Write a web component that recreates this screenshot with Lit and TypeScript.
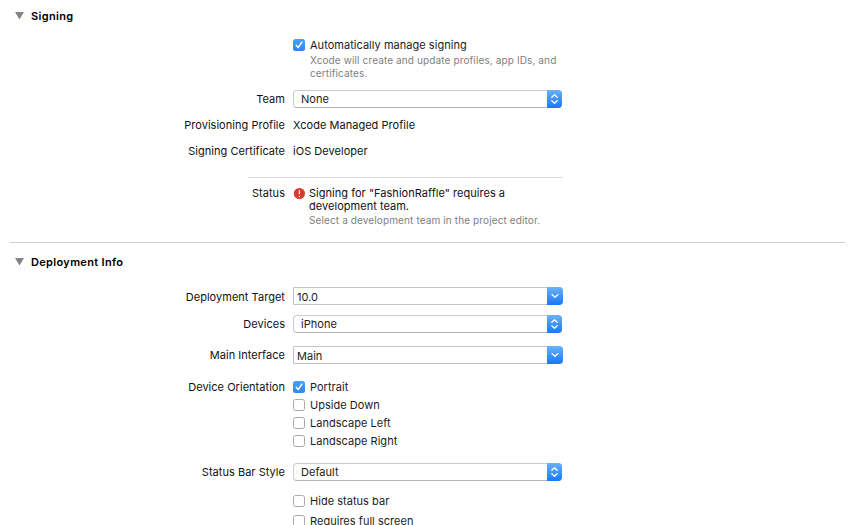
import { LitElement, html, svg, css } from "lit";
import { customElement, property } from "lit/decorators.js";

@customElement("mac-check")
class MacCheck extends LitElement {
  @property({ type: Boolean }) checked = false;
  @property() label = "";
  static styles = css`
    :host { display: flex; align-items: center; height: 18px; }
    .box { box-sizing: border-box; width: 12px; height: 12px; border: 1px solid #a9a9a9; border-radius: 2.5px; background: #fff; margin-right: 5px; flex: none; }
    .box.on { border: 0; background: linear-gradient(#4ba0f6, #2f86ee); }
    svg { display: block; }
    .label { white-space: nowrap; color: #1c1c1c; }
  `;
  render() {
    return html`<span class="box ${this.checked ? "on" : ""}">${this.checked
      ? html`<svg width="12" height="12" viewBox="0 0 12 12"><path d="M3.2 6.3 5.2 8.6 8.9 3.2" fill="none" stroke="#fff" stroke-width="1.5" stroke-linecap="round" stroke-linejoin="round"/></svg>`
      : ""}</span><span class="label">${this.label}</span>`;
  }
}

@customElement("mac-field")
class MacField extends LitElement {
  @property() kind = "popup";
  @property() value = "";
  static styles = css`
    :host { display: block; }
    .field { box-sizing: border-box; display: flex; height: 18px; width: 269px; border: 1px solid #cbcbcb; border-bottom-color: #b5b5b5; border-radius: 4px; background: #fff; }
    .combo { width: 270px; border-color: #c4c4c4; border-radius: 0 4px 4px 0; }
    .value { flex: 1; line-height: 17px; padding-left: 7px; color: #1c1c1c; }
    .combo .value { padding-left: 3px; line-height: 18px; }
    .cap { width: 15px; height: 18px; margin: -1px -1px -1px 0; border-radius: 0 4px 4px 0; background: linear-gradient(#6bb2fa, #3f95f8 50%, #147bf8); }
    .combo .cap { width: 16px; }
    svg { display: block; width: 100%; height: 18px; }
  `;
  render() {
    const combo = this.kind === "combo";
    const arrow = combo
      ? svg`<path d="M5 7.6 8 10.3 11 7.6"/>`
      : svg`<path d="M4.8 7.3 7.5 4.8 10.2 7.3M4.8 10.7 7.5 13.2 10.2 10.7"/>`;
    return html`<div class="field ${combo ? "combo" : ""}">
      <span class="value">${this.value}</span>
      <span class="cap"><svg viewBox="0 0 ${combo ? 16 : 15} 18" fill="none" stroke="#fff" stroke-width="1.3" stroke-linecap="round" stroke-linejoin="round">${arrow}</svg></span>
    </div>`;
  }
}

@customElement("app-root")
class AppRoot extends LitElement {
  static styles = css`
    :host { display: block; box-sizing: border-box; height: 525px; overflow: hidden; background: #fff; color: #111; font: 11px/18px Inter, "Liberation Sans", sans-serif; letter-spacing: 0.03px; padding-top: 7px; }
    .head { display: flex; align-items: center; height: 18px; padding-left: 15px; font-weight: 600; letter-spacing: 0.33px; color: #000; }
    .head svg { margin-right: 7px; }
    .row { display: grid; grid-template-columns: 285px 1fr; column-gap: 8px; white-space: nowrap; }
    .name { text-align: right; }
    .low { padding-top: 1px; height: 17px; }
    .g2 { margin-top: 2px; }
    .g8 { margin-top: 8px; }
    .g10 { margin-top: 10px; }
    .g11 { margin-top: 11px; }
    .g13 { margin-top: 13px; }
    .g14 { margin-top: 14px; }
    .g16 { margin-top: 16px; }
    .help { color: #808080; font-size: 10px; line-height: 13px; letter-spacing: 0.12px; }
    .indent { padding-left: 17px; }
    .rule { height: 1px; width: 315px; margin: 17px 0 9px 248px; background: #dcdcdc; }
    .divider { height: 1px; margin: 15px 16px 10px 10px; background: #cfcfcf; }
    .status { line-height: 13px; }
    .message { display: flex; }
    .message svg { margin: 0 4px 0 0; flex: none; }
    .message .help { margin-top: 1px; }
  `;
  private head(title: string) {
    return html`<div class="head"><svg width="9" height="8" viewBox="0 0 9 8"><path d="M0 0H9L4.5 7.5Z" fill="#858585"/></svg>${title}</div>`;
  }
  render() {
    return html`
      ${this.head("Signing")}
      <div class="row g11"><span></span><div>
        <mac-check checked label="Automatically manage signing"></mac-check>
        <div class="help indent">Xcode will create and update profiles, app IDs, and<br>certificates.</div>
      </div></div>
      <div class="row g10"><span class="name">Team</span><mac-field value="None"></mac-field></div>
      <div class="row g8"><span class="name">Provisioning Profile</span><span>Xcode Managed Profile</span></div>
      <div class="row g8"><span class="name">Signing Certificate</span><span>iOS Developer</span></div>
      <div class="rule"></div>
      <div class="row status"><span class="name">Status</span><div class="message">
        <svg width="12" height="13" viewBox="0 0 12 13"><circle cx="6.4" cy="6.5" r="5.6" fill="#db3a31"/><path d="M6.4 3.3V7.3M6.4 8.9V9.9" stroke="#fff" stroke-width="1.1"/></svg>
        <div>Signing for "FashionRaffle" requires a<br>development team.<div class="help">Select a development team in the project editor.</div></div>
      </div></div>
      <div class="divider"></div>
      ${this.head("Deployment Info")}
      <div class="row g16"><span class="name low">Deployment Target</span><mac-field kind="combo" value="10.0"></mac-field></div>
      <div class="row g10"><span class="name">Devices</span><mac-field value="iPhone"></mac-field></div>
      <div class="row g13"><span class="name">Main Interface</span><mac-field kind="combo" value="Main"></mac-field></div>
      <div class="row g14"><span class="name">Device Orientation</span><div>
        <mac-check checked label="Portrait"></mac-check>
        <mac-check label="Upside Down"></mac-check>
        <mac-check label="Landscape Left"></mac-check>
        <mac-check label="Landscape Right"></mac-check>
      </div></div>
      <div class="row g13"><span class="name">Status Bar Style</span><mac-field value="Default"></mac-field></div>
      <div class="row g11"><span></span><mac-check label="Hide status bar"></mac-check></div>
      <div class="row g2"><span></span><mac-check label="Requires full screen"></mac-check></div>
    `;
  }
}
